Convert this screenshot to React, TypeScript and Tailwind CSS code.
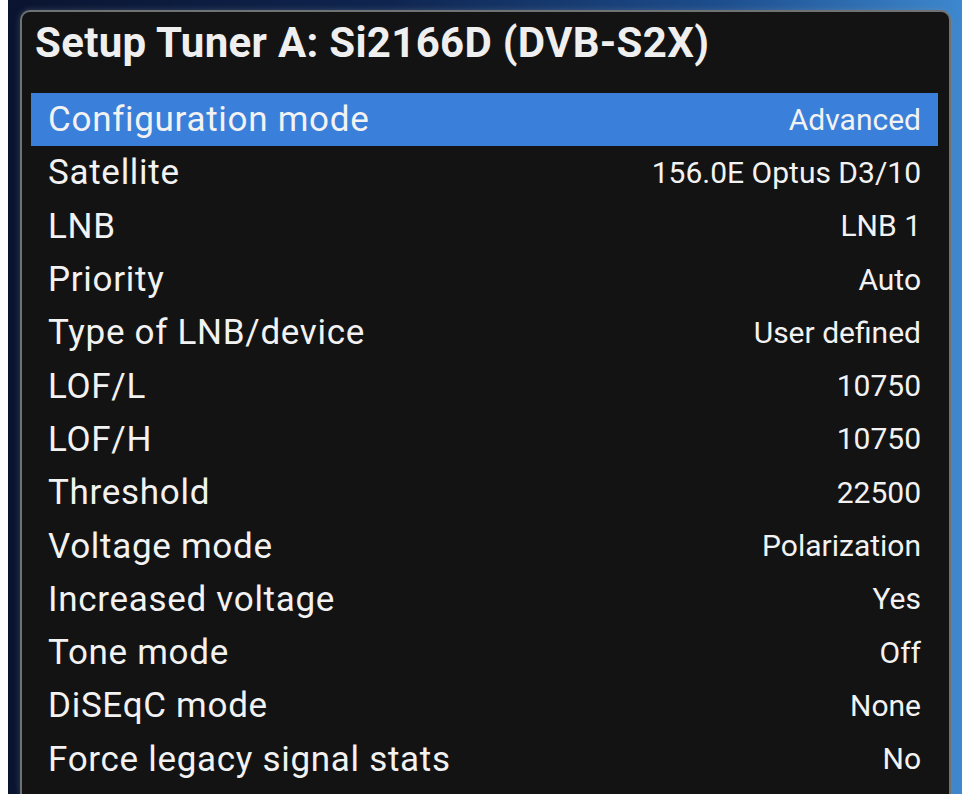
import React from "react";

const rows: [string, string][] = [
  ["Configuration mode", "Advanced"],
  ["Satellite", "156.0E Optus D3/10"],
  ["LNB", "LNB 1"],
  ["Priority", "Auto"],
  ["Type of LNB/device", "User defined"],
  ["LOF/L", "10750"],
  ["LOF/H", "10750"],
  ["Threshold", "22500"],
  ["Voltage mode", "Polarization"],
  ["Increased voltage", "Yes"],
  ["Tone mode", "Off"],
  ["DiSEqC mode", "None"],
  ["Force legacy signal stats", "No"],
];

export default function App() {
  return (
    <div
      className="w-[962px] h-[794px] overflow-hidden flex text-[#f2f2f2]"
      style={{ fontFamily: "Roboto, 'Noto Sans', sans-serif" }}
    >
      <div className="w-[8px] h-full bg-white shrink-0" />
      <div className="flex-1 h-full flex pt-[10px] pl-[12px] pr-[11px] bg-[linear-gradient(90deg,#0a1430_0%,#0f2550_40%,#1d4e8e_75%,#3d88cf_100%)]">
        <div className="flex-1 flex flex-col rounded-t-[10px] border-[2px] border-b-0 border-[#6e7272] bg-[#131314] shadow-[0_0_6px_rgba(140,150,160,0.35)]">
          <div className="pt-[7px] pl-[13px] h-[81px]">
            <div className="text-[42px] leading-[48px] font-bold tracking-[0.3px] text-[#efefef]">
              Setup Tuner A: Si2166D (DVB-S2X)
            </div>
          </div>
          <div className="pl-[9px] pr-[11px] flex flex-col">
            {rows.map(([label, value], i) => (
              <div
                key={label}
                className={
                  "h-[53.3px] flex items-center justify-between px-[17px] " +
                  (i === 0 ? "bg-[#3a7fda]" : "")
                }
              >
                <span className="text-[35px] leading-none tracking-[0.7px]">{label}</span>
                <span className="text-[30px] leading-none">{value}</span>
              </div>
            ))}
          </div>
        </div>
      </div>
    </div>
  );
}
